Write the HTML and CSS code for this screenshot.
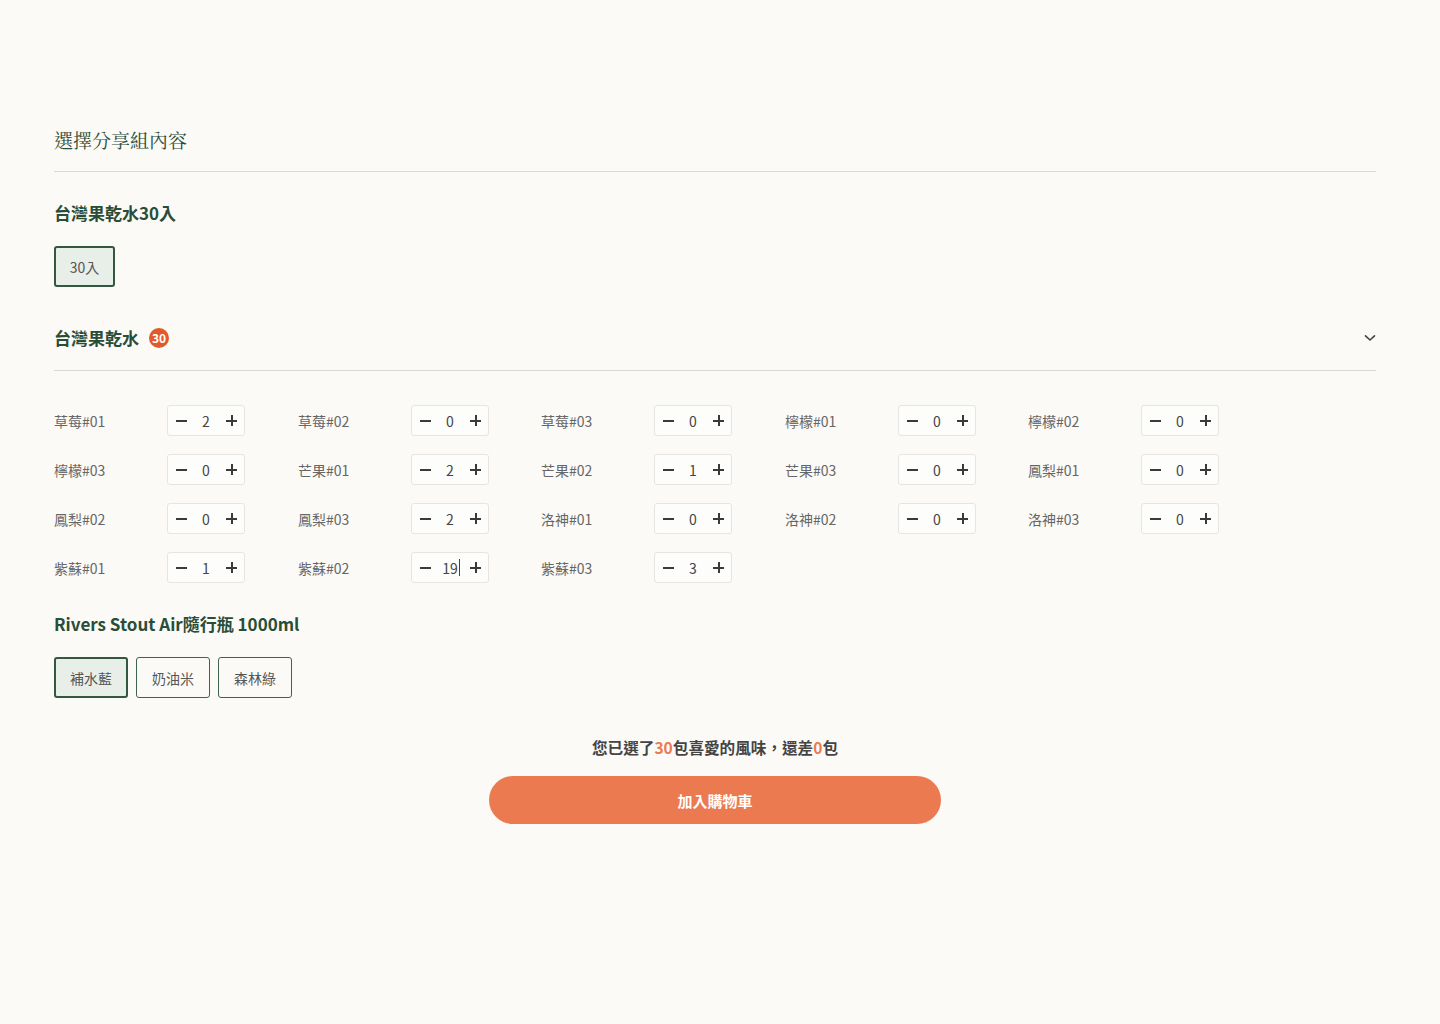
FILE: index.html
```html
<!DOCTYPE html>
<html lang="zh-Hant">
<head>
<meta charset="utf-8">
<title>選擇分享組內容</title>
<link rel="stylesheet" href="styles.css">
</head>
<body>
<main class="wrap">
  <h1 class="page-title">選擇分享組內容</h1>

  <section class="group">
    <h2 class="group-title">台灣果乾水30入</h2>
    <div class="options">
      <button class="opt active">30入</button>
    </div>
  </section>

  <section class="flavors">
    <div class="flavor-head">
      <h2 class="group-title">台灣果乾水</h2>
      <span class="badge">30</span>
      <svg class="chevron" width="12" height="8" viewBox="0 0 12 8"><path d="M1.5 1.8 L6 6 L10.5 1.8" fill="none" stroke="#444" stroke-width="1.6" stroke-linecap="round" stroke-linejoin="round"/></svg>
    </div>
    <div class="grid">
      <div class="item"><span class="lbl">草莓#01</span><div class="stepper"><span class="ico minus"></span><span class="val">2</span><span class="ico plus"></span></div></div>
      <div class="item"><span class="lbl">草莓#02</span><div class="stepper"><span class="ico minus"></span><span class="val">0</span><span class="ico plus"></span></div></div>
      <div class="item"><span class="lbl">草莓#03</span><div class="stepper"><span class="ico minus"></span><span class="val">0</span><span class="ico plus"></span></div></div>
      <div class="item"><span class="lbl">檸檬#01</span><div class="stepper"><span class="ico minus"></span><span class="val">0</span><span class="ico plus"></span></div></div>
      <div class="item"><span class="lbl">檸檬#02</span><div class="stepper"><span class="ico minus"></span><span class="val">0</span><span class="ico plus"></span></div></div>

      <div class="item"><span class="lbl">檸檬#03</span><div class="stepper"><span class="ico minus"></span><span class="val">0</span><span class="ico plus"></span></div></div>
      <div class="item"><span class="lbl">芒果#01</span><div class="stepper"><span class="ico minus"></span><span class="val">2</span><span class="ico plus"></span></div></div>
      <div class="item"><span class="lbl">芒果#02</span><div class="stepper"><span class="ico minus"></span><span class="val">1</span><span class="ico plus"></span></div></div>
      <div class="item"><span class="lbl">芒果#03</span><div class="stepper"><span class="ico minus"></span><span class="val">0</span><span class="ico plus"></span></div></div>
      <div class="item"><span class="lbl">鳳梨#01</span><div class="stepper"><span class="ico minus"></span><span class="val">0</span><span class="ico plus"></span></div></div>

      <div class="item"><span class="lbl">鳳梨#02</span><div class="stepper"><span class="ico minus"></span><span class="val">0</span><span class="ico plus"></span></div></div>
      <div class="item"><span class="lbl">鳳梨#03</span><div class="stepper"><span class="ico minus"></span><span class="val">2</span><span class="ico plus"></span></div></div>
      <div class="item"><span class="lbl">洛神#01</span><div class="stepper"><span class="ico minus"></span><span class="val">0</span><span class="ico plus"></span></div></div>
      <div class="item"><span class="lbl">洛神#02</span><div class="stepper"><span class="ico minus"></span><span class="val">0</span><span class="ico plus"></span></div></div>
      <div class="item"><span class="lbl">洛神#03</span><div class="stepper"><span class="ico minus"></span><span class="val">0</span><span class="ico plus"></span></div></div>

      <div class="item"><span class="lbl">紫蘇#01</span><div class="stepper"><span class="ico minus"></span><span class="val">1</span><span class="ico plus"></span></div></div>
      <div class="item"><span class="lbl">紫蘇#02</span><div class="stepper"><span class="ico minus"></span><span class="val caret">19</span><span class="ico plus"></span></div></div>
      <div class="item"><span class="lbl">紫蘇#03</span><div class="stepper"><span class="ico minus"></span><span class="val">3</span><span class="ico plus"></span></div></div>
    </div>
  </section>

  <section class="group bottle">
    <h2 class="group-title">Rivers Stout Air隨行瓶 1000ml</h2>
    <div class="options">
      <button class="opt wide active">補水藍</button>
      <button class="opt wide">奶油米</button>
      <button class="opt wide">森林綠</button>
    </div>
  </section>

  <div class="summary">
    <p class="summary-text">您已選了<em>30</em>包喜愛的風味，還差<em>0</em>包</p>
    <button class="cart">加入購物車</button>
  </div>
</main>
</body>
</html>
```

FILE: styles.css
```css
* { box-sizing: border-box; }
html, body { margin: 0; padding: 0; }
body {
  background: #fbfaf6;
  font-family: "Noto Sans CJK TC", "Noto Sans", sans-serif;
  color: #333;
  min-height: 1024px;
}
.wrap {
  margin: 0 64px 0 54px;
  padding-top: 125px;
}
.page-title {
  margin: 0;
  font-family: "Noto Serif CJK TC", "Noto Serif TC", "Liberation Serif", serif;
  font-weight: 400;
  font-size: 19px;
  line-height: 30px;
  color: #2a4c38;
  padding-bottom: 16px;
  border-bottom: 1px solid #d8d8d4;
}
.group { margin-top: 28px; }
.group-title {
  margin: 0;
  font-size: 17px;
  line-height: 26px;
  font-weight: 700;
  color: #2a4d37;
}
.options {
  display: flex;
  gap: 8px;
  margin-top: 20px;
}
.opt {
  font-family: inherit;
  height: 41px;
  width: 61px;
  padding: 0;
  font-size: 14px;
  color: #555;
  background: #fbfaf6;
  border: 1px solid #3d6450;
  border-radius: 3px;
}
.opt.wide { width: 74px; }
.opt.active {
  background: #e8eee8;
  border: 2px solid #33573f;
}
.flavors { margin-top: 38px; }
.flavor-head {
  display: flex;
  align-items: center;
  padding-bottom: 19px;
  border-bottom: 1px solid #d8d8d4;
}
.badge {
  margin-left: 10px;
  width: 20px;
  height: 20px;
  border-radius: 50%;
  background: #e15a2a;
  color: #fff;
  font-size: 12px;
  font-weight: 700;
  display: flex;
  align-items: center;
  justify-content: center;
  line-height: 1;
}
.chevron { margin-left: auto; margin-right: 0; }
.grid {
  display: grid;
  grid-template-columns: 244px 243px 244px 243px 244px;
  row-gap: 18px;
  margin-top: 34px;
}
.item {
  display: flex;
  align-items: center;
  height: 31px;
}
.lbl {
  width: 113px;
  font-size: 14px;
  color: #666;
}
.stepper {
  display: flex;
  width: 78px;
  height: 31px;
  border: 1px solid #e6e5e1;
  border-radius: 3px;
  background: #fdfdfb;
  align-items: center;
}
.stepper > span {
  flex: 0 0 26px;
  height: 29px;
  display: flex;
  align-items: center;
  justify-content: center;
  position: relative;
}
.stepper > span:first-child { flex-basis: 25px; }
.val {
  font-size: 14px;
  color: #444;
}
.ico::before, .plus::after {
  content: "";
  position: absolute;
  background: #3a3a3a;
}
.ico::before {
  width: 11px;
  height: 2px;
  left: 8px;
  top: 14px;
}
.plus::after {
  width: 2px;
  height: 11px;
  left: 12px;
  top: 9px;
}
.plus::before { left: 7px; }
.caret::after {
  content: "";
  position: absolute;
  right: 3px;
  top: 6px;
  width: 1px;
  height: 17px;
  background: #444;
}
.bottle { margin-top: 28px; }
.summary {
  display: flex;
  flex-direction: column;
  align-items: center;
  margin-top: 38px;
}
.summary-text {
  margin: 0;
  font-size: 15.6px;
  line-height: 22px;
  font-weight: 700;
  color: #444;
}
.summary-text em {
  font-style: normal;
  color: #ec7a50;
}
.cart {
  margin-top: 18px;
  width: 452px;
  height: 48px;
  border: none;
  border-radius: 24px;
  background: #ec7a50;
  color: #fff;
  font-family: inherit;
  font-size: 15px;
  font-weight: 700;
}
```
